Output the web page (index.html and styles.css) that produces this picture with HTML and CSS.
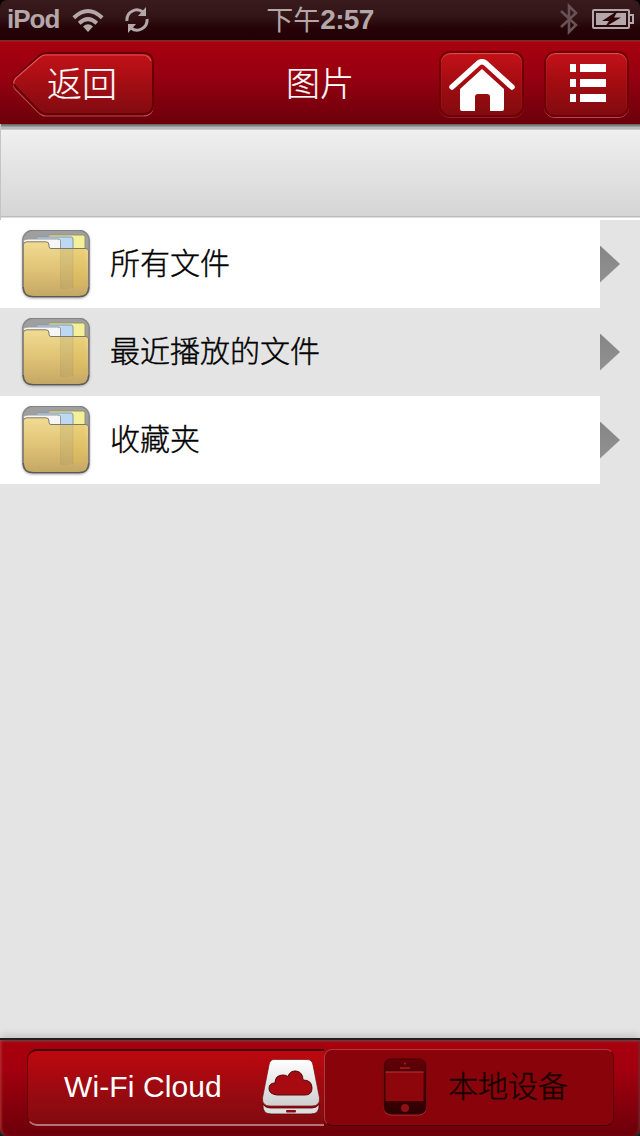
FILE: index.html
```html
<!DOCTYPE html>
<html lang="zh-CN">
<head>
  <meta charset="UTF-8">
  <title>图片</title>
  <meta name="viewport" content="width=device-width, initial-scale=1.0">
  <link rel="stylesheet" href="styles.css">
</head>
<body>
  <!-- Shared folder icon -->
  <svg width="0" height="0" class="defs">
    <defs>
      <linearGradient id="folderFront" x1="0" y1="0" x2="0" y2="1">
        <stop offset="0" stop-color="#f0dc92"/>
        <stop offset="0.5" stop-color="#e0c376"/>
        <stop offset="1" stop-color="#c5a765"/>
      </linearGradient>
      <symbol id="folder" viewBox="0 0 68 68">
        <rect x="0.8" y="0.3" width="66.4" height="66.4" rx="10" fill="#9f9f9f" stroke="#858585" stroke-width="1.3"/>
        <path d="M26 6 L28 5 H61 Q63 5 63 7 V22 H26Z" fill="#f4f09a" stroke="#98986c"/>
        <path d="M14 8 L16 7 H49 Q51 7 51 9 V22 H14Z" fill="#bcd8f2" stroke="#7f97ad"/>
        <path d="M1.500 10.500 Q3 9 6 9 H36 Q38.500 9 38.500 11 V22 H1.500Z" fill="#f6f6f6" stroke="#9a9a9a"/>
        <path d="M1.300 15 Q1.300 11.800 5 11.800 H24 Q27 11.800 27 15 V16.500 Q27 18.500 29 18.500 H64 Q66.500 18.500 66.500 21 V57 Q66.500 66.500 57 66.500 H11 Q1.300 66.500 1.300 57Z" fill="url(#folderFront)" stroke="#80786a" stroke-width="1"/>
        <path d="M38.500 19 H51 V58 Q45 58.500 38.500 59.500Z" fill="#9c9060" opacity="0.220"/>
        <path d="M51 19 H63 V56 L51 58Z" fill="#e4bd34" opacity="0.200"/>
        <path d="M38.500 19 V59 M51 19 V58" stroke="#a08d58" stroke-width="0.700" opacity="0.300"/>
        <path d="M1.300 57 Q1.300 66.700 11 66.700 H57 Q66.700 66.700 66.700 57" fill="none" stroke="#5a5a5a" stroke-width="1.200"/>
      </symbol>
    </defs>
  </svg>

  <div class="screen">
    <div class="status-bar">
      <div class="status-left">
        <span class="device">iPod</span>
        <svg class="wifi" width="32" height="24" viewBox="0 0 32 24">
          <g fill="none" stroke="#b4a7a9" stroke-width="4">
            <path d="M1.800 9.800 Q16 -3.800 30.200 9.800"/>
            <path d="M7.200 15.200 Q16 7 24.800 15.200"/>
          </g>
          <path d="M11 18.500 Q16 14 21 18.500 L16 24Z" fill="#b4a7a9"/>
        </svg>
        <svg class="sync" width="24" height="26" viewBox="0 0 24 26">
          <g fill="none" stroke="#b4a7a9" stroke-width="3">
            <path d="M2 14 A10 10 0 0 1 18 5"/>
            <path d="M22 12 A10 10 0 0 1 6 21"/>
          </g>
          <path d="M21 0 V9 H13Z M3 26 V17 H11Z" fill="#b4a7a9"/>
        </svg>
      </div>
      <div class="clock"><span>下午</span><b>2:57</b></div>
      <div class="status-right">
        <svg width="18" height="32" viewBox="0 0 18 32">
          <path d="M1 8 L16 22 L9 29 V3 L16 10 L1 24" fill="none" stroke="#695255" stroke-width="2.600"/>
        </svg>
        <svg width="42" height="20" viewBox="0 0 42 20">
          <rect x="1" y="1" width="36" height="18" rx="1" fill="none" stroke="#b4a7a9" stroke-width="2"/>
          <rect x="4" y="4" width="30" height="12" fill="#b4a7a9"/>
          <path d="M38 6 H41 V14 H38" fill="none" stroke="#b4a7a9" stroke-width="2"/>
          <path d="M26 1.500 L10 12 H17 L13 18 L29 8.500 H22Z" fill="#2b0509"/>
        </svg>
      </div>
    </div>

    <div class="navbar">
      <a class="back" href="#">
        <svg width="145" height="68" viewBox="0 0 145 68">
          <defs>
            <linearGradient id="backFill" x1="0" y1="0" x2="0" y2="1">
              <stop offset="0" stop-color="#c41118"/>
              <stop offset="1" stop-color="#810b10"/>
            </linearGradient>
          </defs>
          <path d="M35 4 H132 Q142 4 142 14 V53 Q142 63 132 63 H35 Q31 63 27 59 L4 36 Q1 32 4 28 L27 7 Q31 4 35 4Z" fill="none" stroke="#b8474a" stroke-width="1.200" transform="translate(0,2)"/>
          <path d="M35 2 H132 Q142 2 142 12 V53 Q142 63 132 63 H35 Q31 63 27 59 L4 35 Q1 31 4 27 L27 6 Q31 2 35 2Z" fill="url(#backFill)" stroke="#680007" stroke-width="2"/>
          <path d="M3 33 Q2 30 5 27 L28 7 Q31 4 35 4 H131 Q138 4 140 10" fill="none" stroke="#dc5551" stroke-width="1.200"/>
        </svg>
        <span>返回</span>
      </a>
      <h1>图片</h1>
      <div class="nav-actions">
        <a class="nav-btn" href="#">
          <svg width="68" height="54" viewBox="0 0 68 54">
            <path d="M4 28 L30.500 4 Q34 1.500 37.500 4 L64 28" fill="none" stroke="#fff" stroke-width="5.500" stroke-linecap="round" stroke-linejoin="round"/>
            <path d="M34 10 L56 30 V50 Q56 52 54 52 H42 V38 Q42 35 39 35 H30 Q27 35 27 38 V52 H14 Q12 52 12 50 V30Z" fill="#fff"/>
          </svg>
        </a>
        <a class="nav-btn list-btn" href="#">
          <svg width="36" height="38" viewBox="0 0 36 38" fill="#fff">
            <rect width="6" height="8"/><rect x="10" width="26" height="8"/>
            <rect y="15" width="6" height="8"/><rect x="10" y="15" width="26" height="8"/>
            <rect y="30" width="6" height="8"/><rect x="10" y="30" width="26" height="8"/>
          </svg>
        </a>
      </div>
    </div>

    <div class="toolbar"></div>

    <ul class="file-list">
      <li>
        <div class="row"><svg class="icon" width="68" height="68"><use href="#folder"/></svg><span>所有文件</span></div>
        <i class="arrow"></i>
      </li>
      <li class="alt">
        <div class="row"><svg class="icon" width="68" height="68"><use href="#folder"/></svg><span>最近播放的文件</span></div>
        <i class="arrow"></i>
      </li>
      <li>
        <div class="row"><svg class="icon" width="68" height="68"><use href="#folder"/></svg><span>收藏夹</span></div>
        <i class="arrow"></i>
      </li>
    </ul>

    <div class="tabbar">
      <a class="tab active" href="#">
        <span>Wi-Fi Cloud</span>
        <svg width="60" height="56" viewBox="0 0 60 56">
          <defs>
            <linearGradient id="drive" x1="0" y1="0" x2="0" y2="1">
              <stop offset="0" stop-color="#ffffff"/>
              <stop offset="1" stop-color="#cfcfcf"/>
            </linearGradient>
          </defs>
          <path d="M2 45 Q4 49 9 49 H51 Q56 49 58 45 Q59 55 50 55 H10 Q1 55 2 45Z" fill="#dedede" stroke="#5c0508" stroke-width="0.800"/>
          <path d="M13 0.500 H46 Q51 0.500 52 6 L58.500 39 Q59 47 51 47 H9 Q1 47 1.500 39 L8 6 Q9 0.500 13 0.500Z" fill="url(#drive)" stroke="#7d1014" stroke-width="0.700"/>
          <path d="M16 36 Q8 35 8 29.500 Q8 24 14 24 Q14 16 22 16 Q25 16 27 17.500 Q29 11.500 35 12 Q42 13 42 21 Q51 21 51 29 Q51 36 44 36Z" fill="#a70a10" stroke="#56080b" stroke-width="1"/>
          <rect x="25" y="51" width="10" height="2.500" rx="1" fill="#8d0b10"/>
        </svg>
      </a>
      <a class="tab local" href="#">
        <svg width="44" height="58" viewBox="0 0 44 58">
          <defs>
            <linearGradient id="phone" x1="0" y1="0" x2="0" y2="1">
              <stop offset="0" stop-color="#620006"/>
              <stop offset="1" stop-color="#2c0002"/>
            </linearGradient>
          </defs>
          <rect x="1" y="2" width="42" height="55" rx="7" fill="none" stroke="#ad3438"/>
          <rect x="1" y="1" width="42" height="55" rx="7" fill="url(#phone)" stroke="#3c0004"/>
          <rect x="2.500" y="14" width="38" height="29" fill="#8c060b"/>
          <path d="M2.500 14 H40.500" stroke="#b33a3d"/>
          <path d="M17 10 H27" stroke="#a62127" stroke-width="1.500"/>
          <circle cx="22" cy="5.500" r="1" fill="#a62127"/>
          <circle cx="22" cy="50" r="4" fill="#8f1015"/>
        </svg>
        <span>本地设备</span>
      </a>
    </div>
  </div>
</body>
</html>
```
FILE: styles.css
```css
* {
  box-sizing: border-box;
}
body {
  margin: 0;
  font-family: "Liberation Sans", "Noto Sans CJK SC", sans-serif;
  background-color: #000;
}
a {
  color: inherit;
  text-decoration: none;
}
svg {
  display: block;
  flex-shrink: 0;
}
.defs {
  position: absolute;
}
.screen {
  width: 640px;
  height: 1136px;
  display: flex;
  flex-direction: column;
  overflow: hidden;
}

/* status bar */
.status-bar {
  height: 40px;
  display: grid;
  grid-template-columns: 220px 200px 220px;
  align-items: center;
  background: linear-gradient(#391a1d, #331518 40%, #250306 70%, #220205);
  border-radius: 7px 7px 0 0;
  color: #b4a7a9;
}
.status-left {
  display: flex;
  align-items: center;
  padding-left: 7px;
}
.device {
  width: 65px;
  font-size: 26px;
  font-weight: bold;
  line-height: 36px;
  letter-spacing: -1px;
  padding-bottom: 2px;
}
.sync {
  margin-left: 21px;
}
.clock {
  display: flex;
  justify-content: center;
  align-items: center;
  font-size: 27px;
  line-height: 38px;
}
.clock span {
  padding-top: 2px;
}
.clock b {
  font-size: 28px;
  letter-spacing: -0.6px;
}
.status-right {
  display: flex;
  justify-content: flex-end;
  align-items: center;
  gap: 14px;
  padding: 0 6px 2px 0;
}

/* nav bar */
.navbar {
  height: 84px;
  display: grid;
  grid-template-columns: 220px 200px 220px;
  background: linear-gradient(#a7000e, #980010 40%, #6b000a);
  border-top: 2px solid #8d2422;
  color: #fff;
}
.back {
  position: relative;
  margin: 9px 0 0 11px;
}
.back span {
  position: absolute;
  left: 36px;
  top: 10px;
  font-size: 35px;
  line-height: 48px;
  font-weight: 300;
  -webkit-text-stroke: 0.2px #fff;
}
.navbar h1 {
  margin: 18px 0 0;
  text-align: center;
  font-size: 34px;
  line-height: 48px;
  font-weight: 300;
  -webkit-text-stroke: 0.2px #fff;
}
.nav-actions {
  display: flex;
  justify-content: flex-end;
  gap: 20px;
  padding: 9px 11px 0 0;
}
.nav-btn {
  width: 85px;
  height: 66px;
  display: flex;
  justify-content: center;
  padding-top: 6px;
  border: 2px solid #720007;
  border-radius: 11px;
  background: linear-gradient(#c41118, #a10c11 50%, #810b10);
  box-shadow: inset 0 1px 1px #dc5551, 0 1px 0 #8d2024;
}
.list-btn {
  padding: 11px 0 0 3px;
  box-shadow: inset 0 1px 1px #dc5551, 0 1px 0 #b4484c;
}

.toolbar {
  height: 96px;
  border-left: 1px solid #c4c4c4;
  background: linear-gradient(#5c5c5c 0, #8c8c8c 2px, #c8c8c8 4px, #a5a5a5 5px, #efefef 6px, #ebebeb 20px, #d5d5d5 92px, #bcbcbc 92px, #bcbcbc 93px, #fff 94px);
}

/* file list */
.file-list {
  list-style: none;
  margin: 0;
  padding: 0;
  flex: 1;
  background-color: #e4e4e4;
}
.file-list li {
  height: 88px;
  display: flex;
  align-items: center;
}
.row {
  width: 600px;
  height: 88px;
  display: flex;
  align-items: center;
  gap: 20px;
  padding-left: 22px;
  background-color: #fff;
  font-size: 30px;
  font-weight: 300;
  color: #000;
}
.row span {
  padding-bottom: 6px;
  -webkit-text-stroke: 0.4px #000;
}
.alt .row {
  background-color: #e4e4e4;
}
.icon {
  filter: drop-shadow(0 1px 1px #aaa);
}
.arrow {
  width: 20px;
  height: 37px;
  background: linear-gradient(#858585, #929292);
  clip-path: polygon(0 0, 100% 50%, 0 100%);
}

/* bottom tabs */
.tabbar {
  height: 98px;
  display: flex;
  padding: 9px 26px 0 27px;
  border-top: 2px solid #211d20;
  background: linear-gradient(#753e41 0, #a7000e 3px, #a2000e 30px, #6b000a);
  background-origin: padding-box;
  box-shadow: 0 -2px 8px #bbb, inset 3px 0 3px -2px #b53939, inset -3px 0 3px -2px #6d3035;
  border-radius: 0 0 8px 8px;
}
.tab {
  height: 77px;
  display: flex;
  align-items: center;
  font-size: 30px;
  font-weight: 300;
}
.active {
  width: 297px;
  justify-content: space-between;
  padding: 0 3px 2px 36px;
  color: #fff;
  background: linear-gradient(#bd080e, #9d0a10 50%, #810b10);
  border: 1px solid #65000a;
  border-top: 2px solid #3d0003;
  border-right: 0;
  border-bottom: 2px solid #b87376;
  border-radius: 10px 0 0 10px;
}
.active span {
  letter-spacing: 0.1px;
}
.local {
  width: 290px;
  gap: 21px;
  padding: 0 0 2px 58px;
  color: #160001;
  background-color: #88040a;
  border: 1px solid #60000a;
  border-left-color: #a33d40;
  border-top-color: #a93b3e;
  border-bottom-color: #3d0003;
  border-radius: 8px;
}
.local span {
  padding-bottom: 5px;
  -webkit-text-stroke: 0.4px #160001;
}
```
